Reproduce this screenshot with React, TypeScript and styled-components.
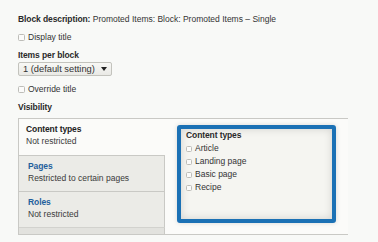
import React from "react";
import styled, { createGlobalStyle } from "styled-components";

const Global = createGlobalStyle`
  html, body {
    margin: 0;
    padding: 0;
    background: #f8f9f7;
  }
  body {
    font-family: "Liberation Sans", Arial, sans-serif;
    font-size: 8.5px;
    color: #333;
  }
`;

const Page = styled.div`
  padding: 13px 0 0 18px;
  width: 360px;
  box-sizing: border-box;
`;

const Line = styled.div<{ $mt?: number }>`
  line-height: 12px;
  height: 12px;
  margin-top: ${(p) => p.$mt ?? 0}px;
  white-space: nowrap;
`;

const Strong = styled.span`
  font-weight: bold;
  color: #2a2a2a;
  letter-spacing: -0.1px;
`;

const Label = styled(Line)`
  font-weight: bold;
  color: #2a2a2a;
  letter-spacing: -0.1px;
`;

const CheckRow = styled.label<{ $mt?: number; $h?: number }>`
  display: flex;
  align-items: center;
  gap: 3px;
  height: ${(p) => p.$h ?? 12}px;
  line-height: ${(p) => p.$h ?? 12}px;
  margin-top: ${(p) => p.$mt ?? 0}px;
  white-space: nowrap;
`;

const Box = styled.span<{ $size?: number }>`
  display: inline-block;
  width: ${(p) => p.$size ?? 7}px;
  height: ${(p) => p.$size ?? 7}px;
  box-sizing: border-box;
  border: 1px solid #bdbdb8;
  border-radius: 1.5px;
  background: #fbfbfa;
  flex: none;
`;

const Select = styled.div`
  margin-top: 1px;
  width: 94px;
  height: 14px;
  box-sizing: border-box;
  display: flex;
  align-items: center;
  justify-content: space-between;
  padding: 0 4px 0 4px;
  border: 1px solid #c3c3bd;
  border-radius: 2px;
  background: linear-gradient(#f8f8f5, #e9e9e5);
  font-size: 9.3px;
  color: #333;
  white-space: nowrap;
`;

const Panel = styled.div`
  margin-top: 5px;
  width: 329px;
  display: grid;
  grid-template-columns: 146px 182px;
  border: 1px solid #c9c9c5;
  border-right: none;
  background: #fbfbf9;
`;

const TabList = styled.div`
  display: flex;
  flex-direction: column;
`;

const Tab = styled.div<{ $active?: boolean }>`
  padding: 4px ${(p) => (p.$active ? 7 : 9)}px ${(p) => (p.$active ? 8 : 7)}px;
  background: ${(p) => (p.$active ? "#fbfbf9" : "#ebebe7")};
  border-top: ${(p) => (p.$active ? "none" : "1px solid #c9c9c5")};
  border-right: 1px solid ${(p) => (p.$active ? "transparent" : "#c9c9c5")};
  line-height: 12px;
`;

const TabTitle = styled.div<{ $active?: boolean }>`
  font-weight: bold;
  letter-spacing: -0.1px;
  color: ${(p) => (p.$active ? "#222" : "#1f5f9c")};
`;

const TabSummary = styled.div`
  color: #3a3a3a;
`;

const TabFiller = styled.div`
  flex: 1;
  background: #e2e2de;
  border-top: 1px solid #d2d2ce;
  border-right: 1px solid #c9c9c5;
`;

const Pane = styled.div`
  padding: 6px 11px 11px 12px;
`;

const Highlight = styled.div`
  height: 98px;
  box-sizing: border-box;
  border: 4px solid #1b71b5;
  border-radius: 3px;
  padding: 0 5px;
  background: #f5f5f1;
  box-shadow: inset 0 0 9px rgba(0, 0, 0, 0.14), 0 0 5px rgba(0, 0, 0, 0.14);
`;

const BoxTitle = styled.div`
  font-weight: bold;
  letter-spacing: -0.1px;
  color: #2a2a2a;
  line-height: 13px;
`;

const Arrow = () => (
  <svg width="6" height="4" viewBox="0 0 6 4">
    <path d="M0 0 L6 0 L3 4 Z" fill="#222" />
  </svg>
);

const tabs = [
  { title: "Content types", summary: "Not restricted", active: true },
  { title: "Pages", summary: "Restricted to certain pages" },
  { title: "Roles", summary: "Not restricted" },
];

const types = ["Article", "Landing page", "Basic page", "Recipe"];

export default function App() {
  return (
    <>
      <Global />
      <Page>
        <Line>
          <Strong>Block description:</Strong> Promoted Items: Block: Promoted Items – Single
        </Line>
        <CheckRow $mt={6}>
          <Box />
          Display title
        </CheckRow>
        <Label $mt={6}>Items per block</Label>
        <Select>
          <span>1 (default setting)</span>
          <Arrow />
        </Select>
        <CheckRow $mt={7}>
          <Box />
          Override title
        </CheckRow>
        <Label $mt={6}>Visibility</Label>
        <Panel>
          <TabList>
            {tabs.map((t) => (
              <Tab key={t.title} $active={t.active}>
                <TabTitle $active={t.active}>{t.title}</TabTitle>
                <TabSummary>{t.summary}</TabSummary>
              </Tab>
            ))}
            <TabFiller />
          </TabList>
          <Pane>
            <Highlight>
              <BoxTitle>Content types</BoxTitle>
              {types.map((t) => (
                <CheckRow key={t} $h={13}>
                  <Box $size={6} />
                  {t}
                </CheckRow>
              ))}
            </Highlight>
          </Pane>
        </Panel>
      </Page>
    </>
  );
}
